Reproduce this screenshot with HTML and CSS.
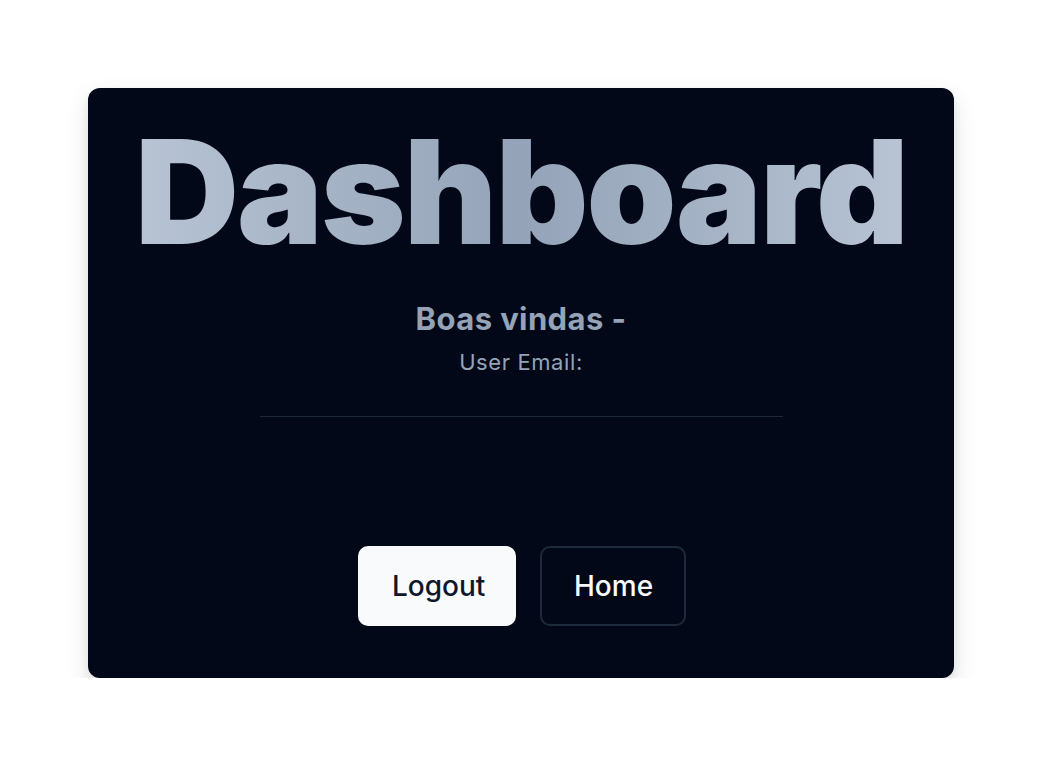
FILE: index.html
```html
<!DOCTYPE html>
<html lang="pt">
<head>
<meta charset="utf-8">
<title>Dashboard</title>
<link rel="stylesheet" href="styles.css">
</head>
<body>
<main class="page">
  <section class="card">
    <h1 class="title">Dashboard</h1>
    <h2 class="welcome">Boas vindas -</h2>
    <p class="email">User Email:</p>
    <div class="divider"></div>
    <div class="actions">
      <button class="btn btn-primary" type="button">Logout</button>
      <button class="btn btn-outline" type="button">Home</button>
    </div>
  </section>
</main>
</body>
</html>
```

FILE: styles.css
```css
* { box-sizing: border-box; }
html, body { margin: 0; padding: 0; background: #ffffff; }
body { font-family: Inter, "Noto Sans", sans-serif; }
.page { display: flex; justify-content: center; padding-top: 88px; }
.card {
  width: 866px;
  height: 590px;
  background: #020817;
  border-radius: 12px;
  box-shadow: 0 10px 25px rgba(0,0,0,0.12), 0 4px 8px rgba(0,0,0,0.06);
  padding: 32px 32px 0;
  display: flex;
  flex-direction: column;
  align-items: center;
}
.title {
  margin: 0;
  font-family: Inter, "Noto Sans", sans-serif;
  font-size: 144px;
  line-height: 1;
  font-weight: 900;
  letter-spacing: -1.9px;
  background: linear-gradient(to right, #b9c5d5, #94a3b8 50%, #b9c5d5);
  -webkit-background-clip: text;
  background-clip: text;
  color: transparent;
  align-self: stretch;
  text-align: center;
}
.welcome {
  margin: 37px 0 0;
  font-size: 31px;
  line-height: 36px;
  font-weight: 700;
  letter-spacing: 0.4px;
  color: #94a3b8;
}
.email {
  margin: 11px 0 0;
  font-size: 22px;
  line-height: 28px;
  font-weight: 400;
  letter-spacing: 0.6px;
  color: #94a3b8;
}
.divider {
  margin-top: 40px;
  width: 523px;
  height: 1px;
  background: #1e293b;
}
.actions {
  margin-top: 129px;
  margin-left: 2px;
  display: flex;
  gap: 24px;
}
.btn {
  height: 80px;
  padding: 0 32px;
  border-radius: 10px;
  font-family: Inter, "Noto Sans", sans-serif;
  font-size: 28px;
  font-weight: 500;
  border: 2px solid transparent;
  cursor: pointer;
}
.btn-primary { background: #f8fafc; color: #0f172a; width: 158px; }
.btn-outline { background: #020817; color: #f8fafc; border-color: #1e293b; width: 146px; }
```
